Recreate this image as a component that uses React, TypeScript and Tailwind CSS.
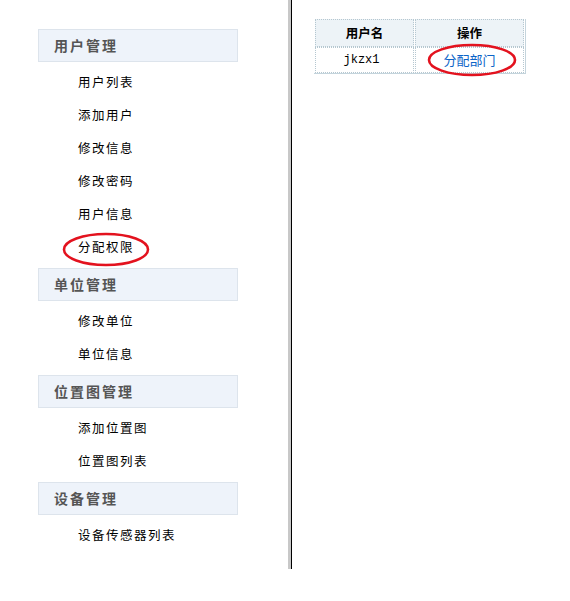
import React from "react";

const groups: { title: string; items: string[] }[] = [
  { title: "用户管理", items: ["用户列表", "添加用户", "修改信息", "修改密码", "用户信息", "分配权限"] },
  { title: "单位管理", items: ["修改单位", "单位信息"] },
  { title: "位置图管理", items: ["添加位置图", "位置图列表"] },
  { title: "设备管理", items: ["设备传感器列表"] },
];

function RedEllipse({ w, h }: { w: number; h: number }) {
  return (
    <svg width={w} height={h} viewBox={`0 0 ${w} ${h}`} className="pointer-events-none">
      <ellipse cx={w / 2} cy={h / 2} rx={w / 2 - 2} ry={h / 2 - 2} fill="none" stroke="#e3121e" strokeWidth="2.6" />
    </svg>
  );
}

export default function App() {
  return (
    <div
      className="flex bg-white w-[570px] h-[601px]"
      style={{ fontFamily: '"Noto Sans CJK SC", "Noto Sans", sans-serif' }}
    >
      <div className="w-[288px] shrink-0 pl-[38px] pt-[29px]">
        <div className="w-[200px]">
          {groups.map((g) => (
            <div key={g.title}>
              <div className="h-[33px] border border-[#dde4ec] bg-[#eef3fa] pl-[15px] flex items-center text-[14px] font-bold tracking-[2px] text-[#555]">
                {g.title}
              </div>
              <div className="py-[4px]">
                {g.items.map((it) => (
                  <div
                    key={it}
                    className="relative h-[33px] pl-[40px] flex items-center text-[12.5px] tracking-[1.5px] text-black"
                  >
                    {it}
                    {it === "分配权限" && (
                      <div className="absolute left-[24px] top-[1px]">
                        <RedEllipse w={88} h={35} />
                      </div>
                    )}
                  </div>
                ))}
              </div>
            </div>
          ))}
        </div>
      </div>

      <div className="w-[4px] h-[569px] shrink-0 bg-[#c8c8c8] border-r border-black" />

      <div className="pl-[22px] pt-[19px]">
        <div className="w-[212px] border-r border-b border-[#c4d4dc]">
          <table className="w-[211px] border-separate [border-spacing:1px_0] text-[12px]">
            <thead>
              <tr>
                <th className="w-[99px] h-[28px] border border-dotted border-[#b5c7d0] bg-[#edf3f7] font-bold text-black text-center p-0 text-[12.5px]">
                  用户名
                </th>
                <th className="h-[28px] border border-dotted border-[#b5c7d0] bg-[#edf3f7] font-bold text-black text-center p-0 text-[12.5px]">
                  操作
                </th>
              </tr>
            </thead>
            <tbody>
              <tr>
                <td
                  className="h-[26px] border border-dotted border-[#b5c7d0] text-center text-black p-0 text-[12px] pr-[6px]"
                  style={{ fontFamily: '"Liberation Mono", monospace' }}
                >
                  jkzx1
                </td>
                <td className="relative h-[26px] border border-dotted border-[#b5c7d0] text-center p-0">
                  <span className="text-[13px] text-[#0b64c8]">分配部门</span>
                  <div className="absolute left-[11px] top-[-5px]">
                    <RedEllipse w={90} h={34} />
                  </div>
                </td>
              </tr>
            </tbody>
          </table>
        </div>
      </div>
    </div>
  );
}
